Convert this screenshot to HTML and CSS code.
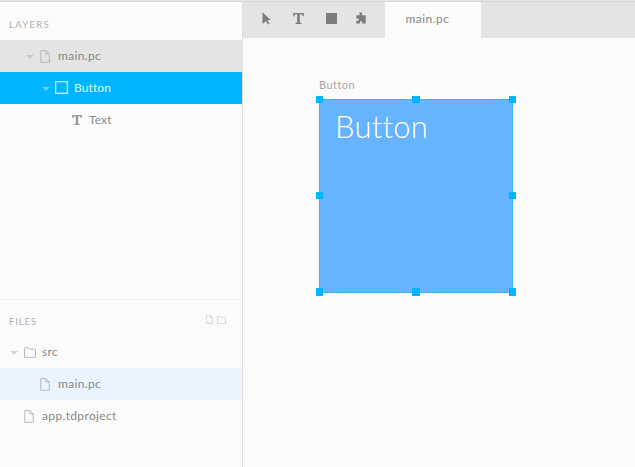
FILE: index.html
```html
<!DOCTYPE html>
<html lang="en">
<head>
<meta charset="utf-8">
<title>main.pc</title>
<link rel="stylesheet" href="styles.css">
</head>
<body>
<svg class="defs" width="0" height="0">
  <symbol id="file" viewBox="0 0 10 13"><path d="M.8.6H6L9.3 4v8.3H.8zM6 .6V4h3.3" fill="none" stroke="currentColor"/></symbol>
  <symbol id="folder" viewBox="0 0 12 11"><path d="M.5 10.3V1.5Q.5.6 1.4.6H4l1.3 1.5h5.3q.9 0 .9.9v7.3z" fill="none" stroke="currentColor"/></symbol>
  <symbol id="type" viewBox="0 0 11 11"><path d="M.2 0h10.6v3.3H9.6Q9.3 1.3 8.5 1.3H6.8v7.9q0 .6 1.6.7V11H2.6V9.9q1.6-.1 1.6-.7V1.3H2.5q-.8 0-1.1 2H.2z" fill="currentColor"/></symbol>
</svg>
<div class="app">
  <aside class="sidebar">
    <section class="layers">
      <header class="head">LAYERS</header>
      <div class="row level-1 open"><i class="caret"></i><svg class="file"><use href="#file"/></svg><span>main.pc</span></div>
      <div class="row level-2 selected"><i class="caret"></i><i class="frame-icon"></i><span>Button</span></div>
      <div class="row level-3"><svg class="type"><use href="#type"/></svg><span>Text</span></div>
    </section>
    <section class="files">
      <header class="head files-head"><span>FILES</span><span class="actions"><svg class="new-file"><use href="#file"/></svg><svg class="new-folder"><use href="#folder"/></svg></span></header>
      <div class="row level-0"><i class="caret"></i><svg class="folder"><use href="#folder"/></svg><span>src</span></div>
      <div class="row level-1 current"><svg class="file"><use href="#file"/></svg><span>main.pc</span></div>
      <div class="row level-0"><svg class="file"><use href="#file"/></svg><span>app.tdproject</span></div>
    </section>
  </aside>
  <main class="editor">
    <nav class="toolbar">
      <div class="tools">
        <svg class="pointer" viewBox="0 0 9 13"><path d="M.5.2 8.6 8 5.5 8.2l1.9 3.6-1.5.8L4 9l-2.4 2.3Q.5 12 .5 11z" fill="currentColor"/></svg>
        <svg class="type"><use href="#type"/></svg>
        <i class="square"></i>
        <svg class="puzzle" viewBox="0 0 10 12"><path d="M.3 3.3h3.1Q4 3 3.5 2.3 2.8.2 4.7.2T6 2.3Q5.5 3 6.1 3.3h3.6v8.3H6.4q-.7-.4-.2-1 .4-1.5-1.1-1.5T4 10.6q.4.7-.3 1H.3V8.9q.3-.6.9-.2 1.6.4 1.6-1T1.3 6.6Q.5 7 .3 6.3z" fill="currentColor"/></svg>
      </div>
      <div class="tab">main.pc</div>
    </nav>
    <div class="canvas">
      <div class="artboard">
        <div class="label">Button</div>
        <div class="shape">
          Button
          <i class="handle left top"></i><i class="handle center top"></i><i class="handle right top"></i>
          <i class="handle left middle"></i><i class="handle right middle"></i>
          <i class="handle left bottom"></i><i class="handle center bottom"></i><i class="handle right bottom"></i>
        </div>
      </div>
    </div>
  </main>
</div>
</body>
</html>
```
FILE: styles.css
```css
* { box-sizing: border-box; }
body { margin: 0; font-family: Lato, sans-serif; font-size: 12px; color: #888; background: #fbfbfb; }
.defs { position: absolute; }
.app { display: flex; height: 467px; border-top: 1px solid #e4e4e4; box-shadow: inset 0 1px #d8d8d8; overflow: hidden; }
.sidebar { width: 243px; padding-top: 1px; border-right: 1px solid #e0e0e0; display: flex; flex-direction: column; }
.layers { height: 297px; }
.files { flex: 1; border-top: 1px solid #efefef; }
.head { height: 38px; padding: 7px 0 0 9px; line-height: 32px; font-size: 9.5px; letter-spacing: 1.3px; color: #b0b0b0; }
.files-head { height: 36px; padding: 6px 16px 0 9px; letter-spacing: .9px; display: flex; justify-content: space-between; }
.actions { display: flex; align-items: flex-start; gap: 4px; padding-top: 9px; color: #c8c8c8; }
.new-file { width: 7px; height: 9px; }
.new-folder { width: 9px; height: 8px; margin-top: 1px; }
.row { height: 32px; display: flex; align-items: center; line-height: 16px; letter-spacing: .35px; }
.row svg, .row i { flex: none; }
.level-0 { padding-left: 24px; }
.level-1 { padding-left: 40px; }
.level-2 { padding-left: 56px; }
.level-3 { padding-left: 72px; }
.open { background: #e4e4e4; }
.selected { background: #00b5ff; color: #e0f6ff; letter-spacing: .1px; }
.current { background: #e9f4fe; }
.caret { width: 0; height: 0; margin: 1px 6px 0 -14px; border: 4px solid transparent; border-top: 4.5px solid #d4d4d4; border-bottom: 0; }
.open .caret { border-top-color: #cacaca; }
.selected .caret { margin-right: 5px; border-top-color: #66d1ff; }
.row .file { width: 10px; height: 13px; margin-right: 8px; color: #b8b8b8; }
.row .folder { width: 12px; height: 11px; margin-right: 6px; color: #b8b8b8; }
.frame-icon { width: 13px; height: 13px; margin-right: 6px; border: 1px solid #c4edff; box-shadow: inset 0 0 0 .5px #80d9ff; margin-top: -1px; }
.row .type { width: 10px; height: 10px; margin-right: 7px; margin-top: -1px; color: #999; }
.level-3 { letter-spacing: .1px; }
.editor { flex: 1; min-width: 0; padding-top: 1px; display: flex; flex-direction: column; }
.toolbar { height: 36px; display: flex; background: #e4e4e4; }
.tools { width: 142px; padding: 0 19px; display: flex; align-items: center; color: #7d7d7d; }
.pointer { width: 9px; height: 13px; margin-right: 22px; margin-top: -3px; }
.tools .type { width: 11px; height: 11px; margin-right: 22px; margin-top: -3px; }
.square { width: 11px; height: 11px; margin-right: 19px; margin-top: -3px; background: #7d7d7d; }
.puzzle { width: 10px; height: 12px; margin-top: -4px; }
.tab { width: 96px; padding-left: 20.5px; background: #fbfbfb; line-height: 33px; letter-spacing: .45px; }
.canvas { flex: 1; padding: 38px 0 0 76px; }
.artboard { width: 194px; }
.label { height: 22.5px; line-height: 17px; font-size: 11px; letter-spacing: .45px; color: #a8a8a8; }
.shape { position: relative; height: 194px; padding: 7px 0 0 15px; border: 1px solid #3db0f9; background: #66b3ff; color: #fff; font-size: 31px; font-weight: 300; line-height: 39px; letter-spacing: .2px; }
.handle { position: absolute; width: 7.5px; height: 7.5px; background: #00b5ff; }
.left { left: -4.5px; }
.center { left: 92px; }
.right { right: -4px; }
.top { top: -4px; }
.middle { top: 92px; }
.bottom { bottom: -4px; }
```
